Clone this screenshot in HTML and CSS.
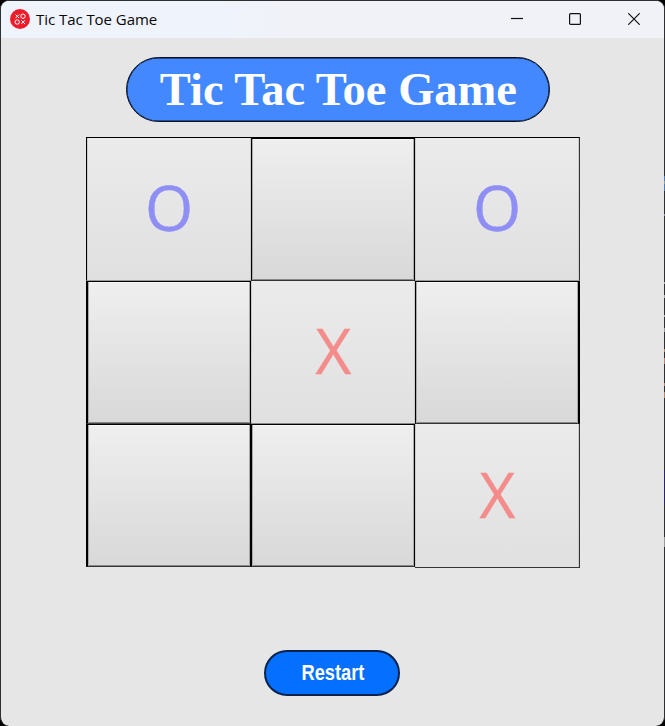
FILE: index.html
```
<!DOCTYPE html>
<html lang="en">
<head>
<meta charset="utf-8">
<title>Tic Tac Toe Game</title>
<link rel="stylesheet" href="styles.css">
</head>
<body>
<div class="window">
  <header class="titlebar">
    <svg class="app-icon" width="20" height="20" viewBox="0 0 20 20">
      <circle cx="10" cy="10" r="10" fill="#ed1c2a"/>
      <g fill="none" stroke="#fff" stroke-width="1">
        <path d="M5.5 5.5l3.6 3.6M9.1 5.5L5.5 9.1M11.3 11.3l3.6 3.6M14.9 11.3l-3.6 3.6"/>
        <circle cx="13" cy="7.2" r="2.2"/><circle cx="7.2" cy="13" r="2.2"/>
      </g>
    </svg>
    <span class="caption">Tic Tac Toe Game</span>
    <div class="controls">
      <svg width="12" height="12" viewBox="0 0 12 12"><path d="M0 5.5h12"/></svg>
      <svg width="12" height="12" viewBox="0 0 12 12"><rect x=".6" y=".6" width="10.8" height="10.8" rx="1"/></svg>
      <svg class="close" width="12" height="12" viewBox="0 0 12 12"><path d="M.3.3l11.4 11.4M11.7.3L.3 11.7"/></svg>
    </div>
  </header>
  <main>
    <h1 class="banner"><span>Tic Tac Toe Game</span></h1>
    <div class="board">
      <div class="cell used c1"><span class="o">O</span></div>
      <div class="cell c2"></div>
      <div class="cell used c3"><span class="o">O</span></div>
      <div class="cell c4"></div>
      <div class="cell used c5"><span class="x">X</span></div>
      <div class="cell c6"></div>
      <div class="cell c7"></div>
      <div class="cell c8"></div>
      <div class="cell used c9"><span class="x">X</span></div>
    </div>
    <button class="restart"><span>Restart</span></button>
  </main>
  <div class="edge"></div>
</div>
</body>
</html>
```
FILE: styles.css
```
* { box-sizing: border-box; }
body { margin: 0; background: #000; overflow: hidden; }
.window {
  position: relative;
  width: 665px;
  height: 726px;
  border: 1px solid #2f2f32;
  border-bottom: 0;
  border-radius: 9px;
  background: #e6e6e6;
}
.titlebar {
  height: 37px;
  display: flex;
  align-items: center;
  padding: 0 24px 0 9px;
  border-radius: 8px 8px 0 0;
  background: linear-gradient(90deg, #eff3fb 0, #eff3fb 220px, #f1f2f8 300px);
}
.app-icon { display: block; margin-top: -1px; }
.caption {
  margin: -2px 0 0 6px;
  font: 15px/20px "Open Sans", sans-serif;
  letter-spacing: -.05px;
  color: #080808;
  white-space: nowrap;
}
.controls { display: flex; gap: 46px; margin: -1px 0 0 auto; }
.controls svg { display: block; fill: none; stroke: #111; stroke-width: 1.2; }
.controls .close { margin-left: 1px; }
main { display: flex; flex-direction: column; align-items: flex-start; }
.banner {
  width: 424px;
  height: 65px;
  margin: 19px 0 0 125px;
  border: 1px solid #0a1020;
  box-shadow: inset 0 0 0 .5px #0a1020;
  border-radius: 33px;
  background: #4488ff;
  color: #fff;
  display: flex;
  align-items: center;
  justify-content: center;
  font: bold 47px/64px "Liberation Serif", serif;
  white-space: nowrap;
}
.banner span { transform: scaleX(.99); padding-bottom: 2px; }
.board {
  margin: 15px 0 0 85px;
  display: grid;
  grid-template-columns: 165px 164px 165px;
  grid-template-rows: 144px 143px 144px;
}
.cell {
  border: 0 solid #000;
  background: linear-gradient(#efefef, #d8d8d8) border-box;
  box-shadow: inset 1px 0 #aaa, inset -1px 0 #aaa, inset 0 1px #f7f7f7, inset 0 -1px #888;
  display: flex;
  align-items: center;
  justify-content: center;
  font: 62px/84px "Open Sans", sans-serif;
}
.used {
  background: linear-gradient(#ebebeb, #e0e0e0) border-box;
  box-shadow: inset 1px 0 #ccc, inset -1px 0 #ccc;
}
.c1 { border-width: 1px 0 1px 1px; border-bottom-color: #999; }
.c2 { border-width: 2px 1px 1px; border-bottom-color: #333; }
.c3 { border-width: 1px 1px 1px 0; border-bottom-color: #999; border-right-color: #333; }
.c4 { border-width: 1px 1px 1px 2px; border-bottom-color: #444; }
.c5 { border-width: 0 0 1px; border-bottom-color: #888; }
.c6 { border-width: 1px 2px 1px 1px; border-bottom-color: #333; }
.c7 { border-width: 1px 1px 1px 2px; border-bottom-color: #333; margin-bottom: 1px; }
.c8 { border-width: 1px 1px 1px; border-bottom-color: #333; margin-bottom: 1px; }
.c9 { border-width: 0 1px 1px 0; border-color: #333; }
.o { color: #8e8ef4; padding-bottom: 4px; -webkit-text-stroke: .4px #8e8ef4; }
.x { color: #f48c8c; padding: 0 0 4px 1px; -webkit-text-stroke: .4px #f48c8c; }
.restart {
  width: 136px;
  height: 46px;
  margin: 82px 0 0 263px;
  padding: 0 0 0 1px;
  border: 2px solid #06224d;
  border-radius: 23px;
  background: #0570ff;
  color: #fff;
  font: bold 22px/42px "Liberation Sans", sans-serif;
}
.restart span { display: inline-block; transform: scaleX(.83); }
/* desktop colours showing through the window's right edge */
.edge {
  position: absolute;
  top: 149px;
  right: -1px;
  width: 1px;
  height: 500px;
  background: linear-gradient(#2f2f32 26px, #4d7cb0 26px 31px, #999 31px 34px, #4d7cb0 34px 41px, #2f2f32 41px 64px, #889 64px 66px, #2f2f32 66px 132px, #aaa 132px 134px, #2f2f32 134px 145px, #aaa 145px 148px, #2f2f32 148px 165px, #aaa 165px 167px, #2f2f32 167px 178px, #999 178px 182px, #2f2f32 182px 199px, #b08672 199px 202px, #2f2f32 202px 208px, #b08672 208px 214px, #2f2f32 214px 233px, #b08672 233px 236px, #2f2f32 236px 242px, #b08672 242px 248px, #2f2f32 248px 320px, #28246a 320px 355px, #2f2f32 355px 387px, #999 387px 397px, #2f2f32 397px);
}
```
